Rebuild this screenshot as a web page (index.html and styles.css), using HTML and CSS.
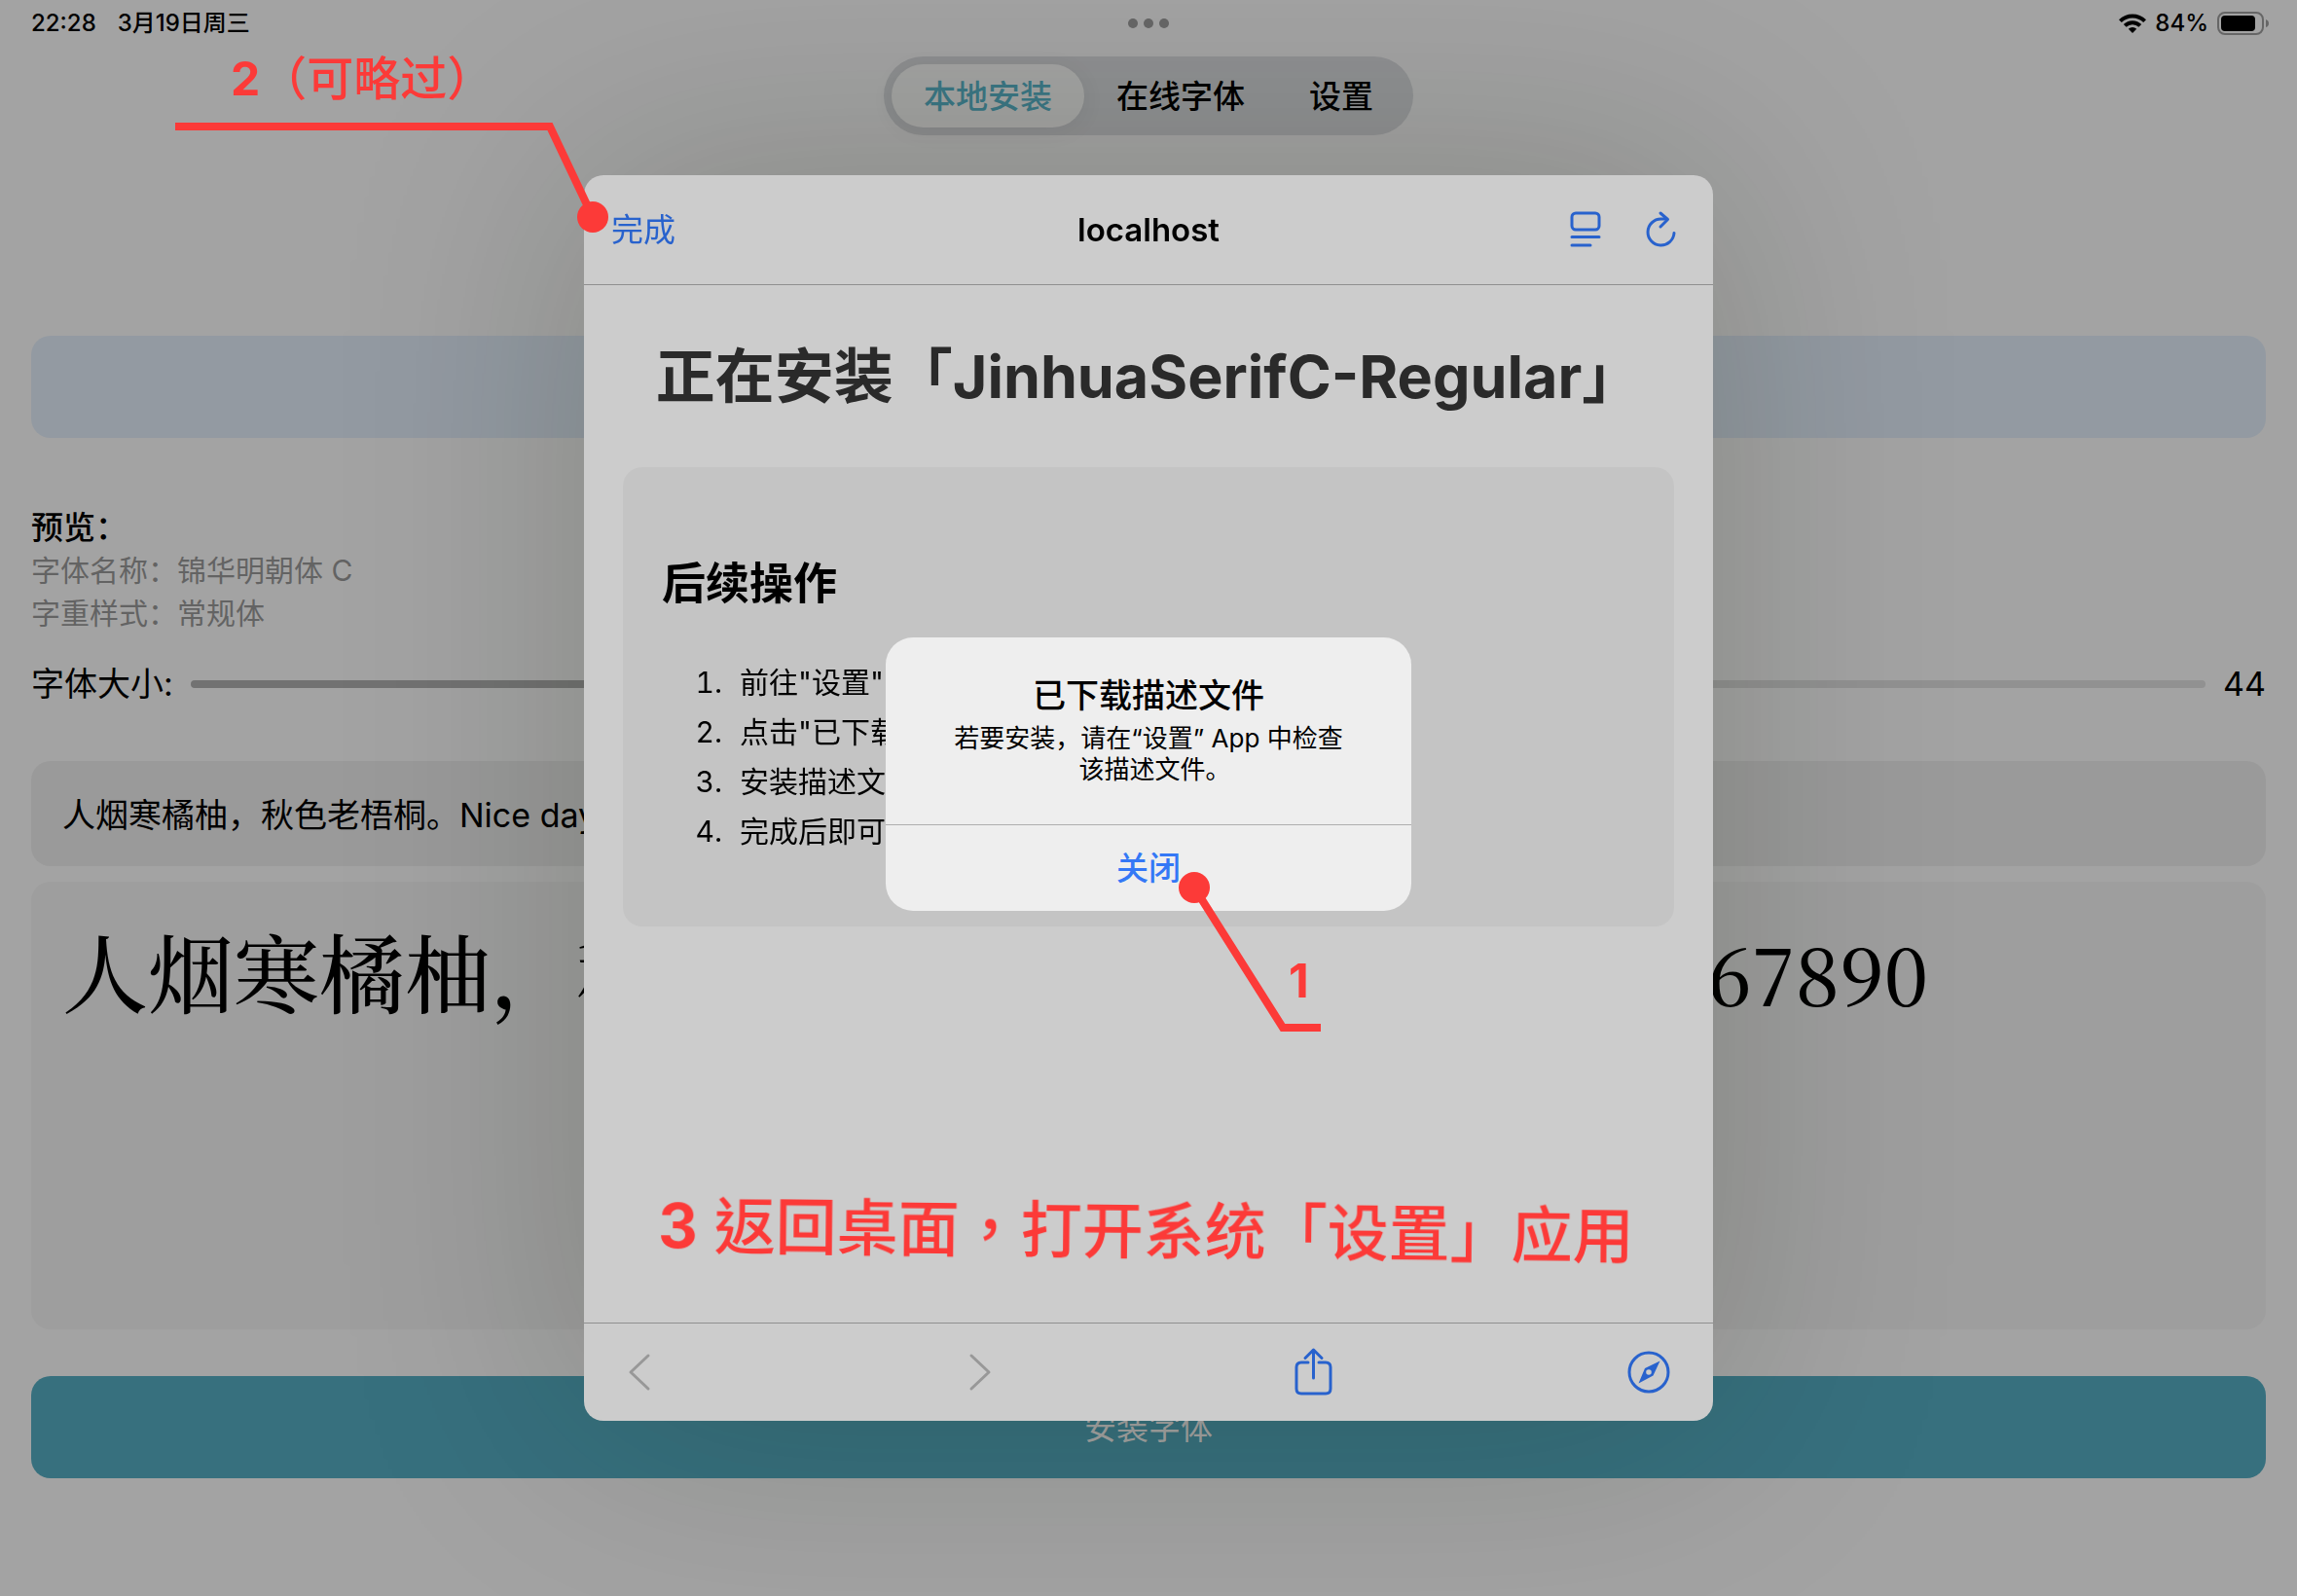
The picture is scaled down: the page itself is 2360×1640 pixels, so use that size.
FILE: index.html
```html
<!DOCTYPE html>
<html lang="zh-CN">
<head>
    <meta charset="UTF-8">
    <meta name="viewport" content="width=device-width, initial-scale=1.0">
    <title>本地安装</title>
    <link rel="stylesheet" href="styles.css">
</head>
<body>
    <div class="app">
        <header class="status-bar">
            <div class="status-left">
                <span>22:28</span>
                <span>3月19日周三</span>
            </div>
            <div class="status-dots"><i></i><i></i><i></i></div>
            <div class="status-right">
                <svg class="wifi" viewBox="0 0 28 20" aria-hidden="true">
                    <g fill="none" stroke="#000" stroke-width="4">
                        <path d="M1.4 7.6a18 18 0 0 1 25.2 0"/>
                        <path d="M6.2 12.4a11 11 0 0 1 15.6 0"/>
                    </g>
                    <path d="M14 20l-4.2-4.3a6 6 0 0 1 8.4 0z"/>
                </svg>
                <span>84%</span>
                <svg class="battery" viewBox="0 0 50 24" aria-hidden="true">
                    <rect x="1" y="1" width="46" height="22" rx="7" fill="none" stroke="#666" stroke-width="2"/>
                    <rect x="4" y="4" width="35" height="16" rx="4"/>
                    <path d="M50 8q3 1 3 4t-3 4z" fill="#666"/>
                </svg>
            </div>
        </header>

        <nav class="tabs">
            <button class="tab active">本地安装</button>
            <button class="tab">在线字体</button>
            <button class="tab">设置</button>
        </nav>

        <main class="content">
            <button class="pick-button" aria-label="选择字体"></button>

            <section class="font-info">
                <h2>预览：</h2>
                <p>字体名称：锦华明朝体 C</p>
                <p>字重样式：常规体</p>
            </section>

            <div class="size-row">
                <label for="fontSize">字体大小:</label>
                <input type="range" id="fontSize" min="12" max="96" value="44">
                <output for="fontSize">44</output>
            </div>

            <input class="sample-input" type="text" aria-label="预览文字" value="人烟寒橘柚，秋色老梧桐。Nice day 1234567890">

            <div class="sample-preview">
                <span>人烟寒橘柚，秋色老梧桐。</span>
                <span class="latin">Nice day 1234567890</span>
            </div>

            <button class="install-button">安装字体</button>
        </main>
    </div>

    <div class="overlay">
        <section class="sheet">
            <header class="sheet-header">
                <button class="done-button">完成</button>
                <h1>localhost</h1>
                <div class="sheet-tools">
                    <button class="icon-button" aria-label="阅读器">
                        <svg viewBox="0 0 40 40">
                            <rect x="5" y="3" width="28" height="17" rx="4"/>
                            <path d="M5 27.5h28M5 36h19"/>
                        </svg>
                    </button>
                    <button class="icon-button" aria-label="刷新">
                        <svg viewBox="0 0 40 40">
                            <path d="M26 9h-5.500A13.500 13.500 0 1 0 34 23.500"/>
                            <path d="M20 3l7.500 6.500L20 17"/>
                        </svg>
                    </button>
                </div>
            </header>

            <article class="sheet-body">
                <h2>正在安装「JinhuaSerifC-Regular」</h2>
                <div class="steps">
                    <h3>后续操作</h3>
                    <ol>
                        <li>前往"设置"</li>
                        <li>点击"已下载</li>
                        <li>安装描述文件</li>
                        <li>完成后即可</li>
                    </ol>
                </div>
            </article>

            <footer class="sheet-footer">
                <button class="nav-button" aria-label="后退" disabled>
                    <svg viewBox="0 0 56 56"><path d="M36 11L18 28l18 17"/></svg>
                </button>
                <button class="nav-button" aria-label="前进" disabled>
                    <svg viewBox="0 0 56 56"><path d="M23 11l18 17-18 17"/></svg>
                </button>
                <button class="nav-button" aria-label="共享">
                    <svg viewBox="0 0 56 56">
                        <path d="M23 18h-7q-5 0-5 5v22q0 5 5 5h25q5 0 5-5V23q0-5-5-5h-7"/>
                        <path d="M28.500 34V5M20 13.500l8.500-8.500L37 13.500"/>
                    </svg>
                </button>
                <button class="nav-button" aria-label="在 Safari 中打开">
                    <svg viewBox="0 0 56 56">
                        <circle cx="28" cy="28" r="20"/>
                        <path class="needle" fill-rule="evenodd" d="M39.500 16.500l-7 15-15 8 6.500-15.500zM28 25.200a2.800 2.800 0 1 0 0 5.600 2.800 2.800 0 0 0 0-5.600z"/>
                    </svg>
                </button>
            </footer>
        </section>
    </div>

    <div class="overlay alert-overlay">
        <div class="alert" role="alertdialog" aria-labelledby="alertTitle">
            <div class="alert-text">
                <h2 id="alertTitle">已下载描述文件</h2>
                <p>若要安装，请在“设置” App 中检查<br>该描述文件<span class="stop">。</span></p>
            </div>
            <button class="alert-button">关闭</button>
        </div>
    </div>

    <!-- step callouts -->
    <svg class="callouts" viewBox="0 0 2360 1640">
        <path d="M180 130H565L609 223"/>
        <circle cx="609" cy="223" r="16"/>
        <path d="M1227 912L1318 1056H1357"/>
        <circle cx="1227" cy="912" r="16"/>
        <text class="note" x="237" y="98"><tspan class="num">2</tspan>（可略过）</text>
        <text class="note num" x="1324" y="1025">1</text>
        <text class="note large" lang="zh-TW" x="676" y="1282" transform="rotate(0.6 676 1282)"><tspan class="num">3</tspan> 返回桌面，打开系统「设置」应用</text>
    </svg>
</body>
</html>
```
FILE: styles.css
```css
* {
    box-sizing: border-box;
}

body {
    margin: 0;
    font-family: Inter, "Noto Sans CJK SC", sans-serif;
    font-size: 33px;
    line-height: 44px;
    color: #000;
    background-color: #a3a3a3;
}

h1, h2, h3, p {
    margin: 0;
}

button, input {
    margin: 0;
    padding: 0;
    border: none;
    background: none;
    font: inherit;
    color: inherit;
}

.app {
    display: flex;
    flex-direction: column;
    min-height: 100vh;
}

.status-bar {
    display: grid;
    grid-template-columns: 1fr auto 1fr;
    align-items: center;
    height: 48px;
    padding: 0 32px;
    font-size: 24px;
    font-weight: 500;
    line-height: 32px;
}

.status-left {
    display: flex;
    gap: 22px;
}

.status-dots {
    display: flex;
    gap: 6px;
}

.status-dots i {
    width: 10px;
    height: 10px;
    border-radius: 50%;
    background-color: #666;
}

.status-right {
    display: flex;
    align-items: center;
    justify-content: flex-end;
    gap: 9px;
}

.wifi {
    width: 28px;
    height: 20px;
}

.battery {
    width: 50px;
    height: 24px;
    overflow: visible;
}

.tabs {
    display: flex;
    align-self: center;
    margin-top: 10px;
    padding: 8px;
    border-radius: 41px;
    background-color: #8f9092;
}

.tab {
    height: 65px;
    padding: 0 33px;
    border-radius: 33px;
    font-weight: 500;
}

.tab.active {
    color: #3b7684;
    background-color: #a3a3a2;
    box-shadow: 0 4px 24px rgba(0, 0, 0, 0.06);
}

.content {
    display: flex;
    flex: 1;
    flex-direction: column;
    padding: 206px 32px 121px;
}

.pick-button {
    height: 105px;
    border-radius: 20px;
    background-color: #939aa2;
}

.font-info {
    margin-top: 70px;
}

.font-info h2 {
    font-size: 33px;
    font-weight: 500;
}

.font-info p {
    font-size: 30px;
    color: #636363;
}

.size-row {
    display: flex;
    align-items: center;
    gap: 18px;
    margin-top: 29px;
    font-size: 34px;
}

.size-row input {
    flex: 1;
    height: 8px;
    border-radius: 4px;
    appearance: none;
    background: linear-gradient(to right, #727272 40%, #919191 40%);
}

.size-row input::-webkit-slider-thumb {
    width: 40px;
    height: 40px;
    border-radius: 50%;
    appearance: none;
    background-color: #a3a3a3;
}

.sample-input {
    height: 108px;
    margin-top: 57px;
    padding: 0 32px 2px;
    border-radius: 20px;
    background-color: #9a9a9a;
    font-size: 34px;
}

.sample-preview {
    display: flex;
    flex: 1;
    gap: 56px;
    align-items: baseline;
    align-content: flex-start;
    margin-top: 16px;
    padding: 26px 32px;
    border-radius: 20px;
    background-color: #9e9e9e;
    font-family: "Noto Serif CJK SC", "Liberation Serif", "Noto Sans CJK SC", serif;
    font-size: 88px;
    font-weight: 500;
    line-height: 128px;
}

.sample-preview .latin {
    font-size: 80px;
}

.install-button {
    height: 105px;
    margin-top: 48px;
    border-radius: 20px;
    color: #a3a3a3;
    background-color: #37707e;
}

.overlay {
    position: fixed;
    inset: 0;
    display: flex;
    align-items: center;
    justify-content: center;
}

.sheet {
    display: flex;
    flex-direction: column;
    width: min(1160px, 92vw);
    height: min(1280px, 92vh);
    border-radius: 20px;
    background-color: #cccccc;
    box-shadow: 0 0 280px rgba(16, 26, 0, 0.2);
}

.sheet-header {
    display: grid;
    grid-template-columns: 1fr auto 1fr;
    align-items: center;
    height: 113px;
    padding: 0 28px;
    border-bottom: 1px solid #8f8f8f;
}

.sheet-header h1 {
    font-size: 33px;
    font-weight: 600;
}

.done-button {
    justify-self: start;
    color: #2862cd;
}

.sheet-tools {
    display: flex;
    justify-content: flex-end;
    gap: 36px;
    padding-right: 6px;
}

.icon-button,
.nav-button {
    display: flex;
    color: #2862cd;
}

.nav-button:disabled {
    color: #989898;
}

.icon-button svg {
    width: 40px;
    height: 40px;
}

.nav-button svg {
    width: 56px;
    height: 56px;
}

.icon-button svg,
.nav-button svg {
    fill: none;
    stroke: currentColor;
    stroke-width: 3;
    stroke-linecap: round;
    stroke-linejoin: round;
}

.nav-button .needle {
    fill: currentColor;
    stroke: none;
}

.sheet-body {
    flex: 1;
    padding: 54px 40px;
}

.sheet-body h2 {
    font-size: 61px;
    line-height: 80px;
    color: #2a2a2a;
    text-align: center;
    white-space: nowrap;
}

.steps {
    margin-top: 53px;
    padding: 88px 40px 72px;
    border-radius: 20px;
    background-color: #c4c4c4;
}

.steps h3 {
    font-size: 45px;
    line-height: 64px;
}

.steps ol {
    margin: 44px 0 0;
    padding-left: 70px;
    font-size: 30px;
    line-height: 51px;
}

.steps li {
    padding-left: 10px;
}

.sheet-footer {
    display: flex;
    align-items: center;
    justify-content: space-between;
    height: 101px;
    padding: 0 38px 0 30px;
    border-top: 1px solid #8f8f8f;
}

.alert-overlay {
    padding-bottom: 50px;
}

.alert {
    width: 540px;
    border-radius: 28px;
    background-color: #eeeeee;
    text-align: center;
}

.alert-text {
    padding: 36px 32px 40px;
}

.alert-text h2 {
    font-size: 34px;
    font-weight: 500;
    line-height: 48px;
}

.alert-text p {
    margin-top: 4px;
    font-size: 26px;
    line-height: 32px;
}

/* half-width full stop so the last line centres on its glyphs */
.stop {
    font-feature-settings: "halt";
}

.alert-button {
    width: 100%;
    height: 89px;
    border-top: 1px solid #aeaeae;
    font-weight: 500;
    color: #3478f6;
}

.callouts {
    position: fixed;
    inset: 0;
    width: 100%;
    height: 100%;
    pointer-events: none;
}

.callouts path {
    fill: none;
    stroke: #fc3a38;
    stroke-width: 8;
}

.callouts circle,
.callouts .note {
    fill: #fc3a38;
}

.note {
    font-size: 48px;
    font-weight: 500;
}

.note.large {
    font-family: Inter, "Noto Sans CJK TC", sans-serif;
    font-size: 63px;
}

.num {
    font-weight: 700;
}
```
